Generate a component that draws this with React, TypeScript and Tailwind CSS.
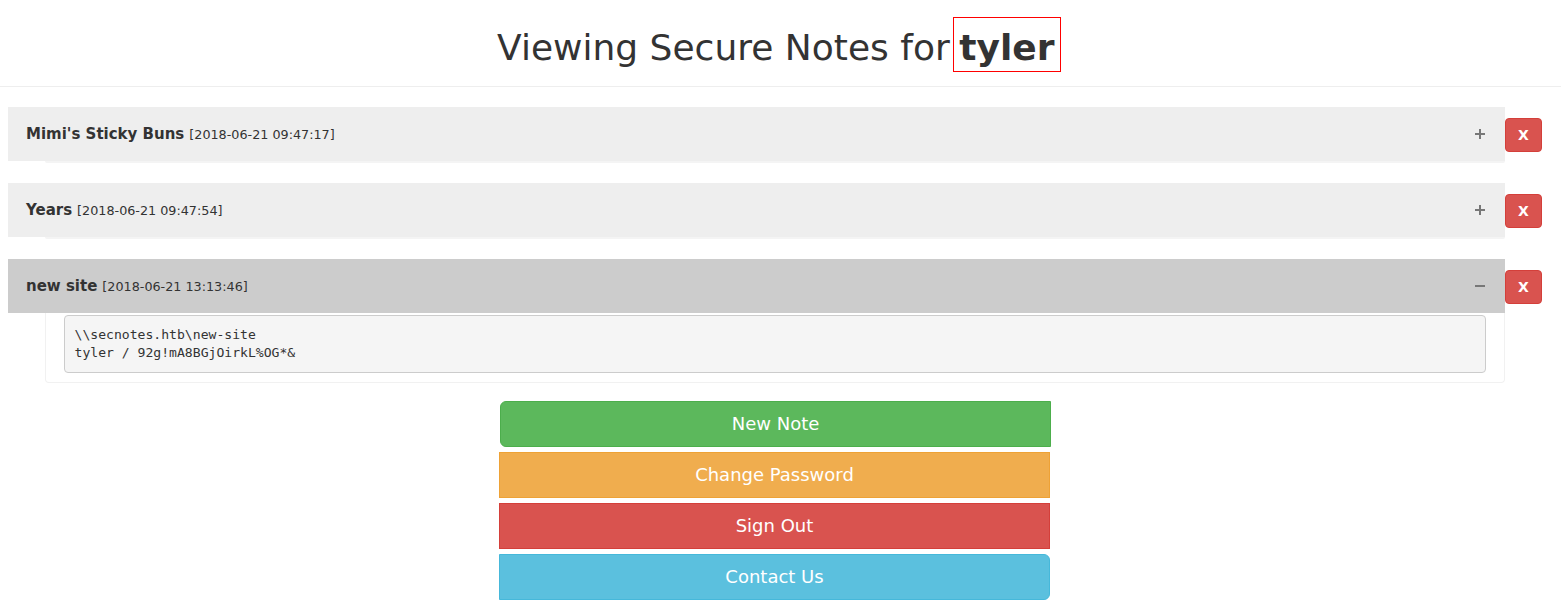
import React from "react";

function Plus() {
  return (
    <svg width="10" height="10" viewBox="0 0 10 10" className="shrink-0">
      <rect x="4" y="0" width="2" height="10" fill="#777" />
      <rect x="0" y="4" width="10" height="2" fill="#777" />
    </svg>
  );
}

function Minus() {
  return (
    <svg width="10" height="10" viewBox="0 0 10 10" className="shrink-0">
      <rect x="0" y="4" width="10" height="2" fill="#777" />
    </svg>
  );
}

type Note = { title: string; date: string; open?: boolean; body?: string[] };

const notes: Note[] = [
  { title: "Mimi's Sticky Buns", date: "[2018-06-21 09:47:17]" },
  { title: "Years", date: "[2018-06-21 09:47:54]" },
  {
    title: "new site",
    date: "[2018-06-21 13:13:46]",
    open: true,
    body: ["\\\\secnotes.htb\\new-site", "tyler / 92g!mA8BGjOirkL%OG*&"],
  },
];

function NoteRow({ note }: { note: Note }) {
  return (
    <div className="flex items-start pl-2 pr-[19px] mb-[20px]">
      <div className="flex-1">
        <div
          className={
            "h-[54px] flex items-center pl-[18px] pr-[20px] " +
            (note.open ? "bg-[#cccccc]" : "bg-[#eeeeee]")
          }
        >
          <div className="flex-1 text-[#333] flex items-baseline">
            <span className="font-bold text-[15px]">{note.title}</span>
            <span className="text-[12.75px] ml-[5px]">{note.date}</span>
          </div>
          {note.open ? <Minus /> : <Plus />}
        </div>
        {note.open ? (
          <div className="ml-[37px] border-x border-b border-[#f1f1f1] rounded-b-[4px] px-[18px] pt-[2px] pb-[9px]">
            <pre
              className="bg-[#f5f5f5] border border-[#cccccc] rounded-[4px] p-[9.5px] text-[13.1px] leading-[18.57px] text-[#333] m-0"
              style={{ fontFamily: '"DejaVu Sans Mono", monospace' }}
            >
              {note.body!.join("\n")}
            </pre>
          </div>
        ) : (
          <div className="ml-[37px] h-[2px] bg-[#f4f4f4] rounded-b-[2px]" />
        )}
      </div>
      <button className="shrink-0 w-[37px] h-[34px] mt-[11px] bg-[#d9534f] border border-[#d43f3a] rounded-[4px] text-white font-bold text-[14px] leading-[20px] flex items-center justify-center">
        X
      </button>
    </div>
  );
}

export default function App() {
  return (
    <div
      className="bg-white min-h-[616px] text-[#333]"
      style={{ fontFamily: '"DejaVu Sans", sans-serif' }}
    >
      <div className="pt-[17px] pb-[14px] border-b border-[#eeeeee]">
        <h1 className="text-center text-[36px] leading-[40px] font-normal m-0 pr-[3px]">
          Viewing Secure Notes for
          <span className="inline-block ml-[3px] border border-[#ff0000] px-[5.5px] pt-[10px] pb-[3px] font-bold leading-[40px]">
            tyler
          </span>
        </h1>
      </div>
      <div className="pt-[20px]">
        {notes.map((n, i) => (
          <NoteRow key={i} note={n} />
        ))}
      </div>
      <div className="pr-[12px] -mt-[2px]">
        <div className="w-[551px] mx-auto flex flex-col items-start gap-[5px]">
          <button className="ml-[1px] w-[551px] h-[46px] bg-[#5cb85c] border border-[#4cae4c] rounded-l-[6px] text-white text-[18px] leading-[24px]">
            New Note
          </button>
          <button className="w-[551px] h-[46px] bg-[#f0ad4e] border border-[#eea236] text-white text-[18px] leading-[24px]">
            Change Password
          </button>
          <button className="w-[551px] h-[46px] bg-[#d9534f] border border-[#d43f3a] text-white text-[18px] leading-[24px]">
            Sign Out
          </button>
          <button className="w-[551px] h-[46px] bg-[#5bc0de] border border-[#46b8da] rounded-r-[6px] text-white text-[18px] leading-[24px]">
            Contact Us
          </button>
        </div>
      </div>
    </div>
  );
}
